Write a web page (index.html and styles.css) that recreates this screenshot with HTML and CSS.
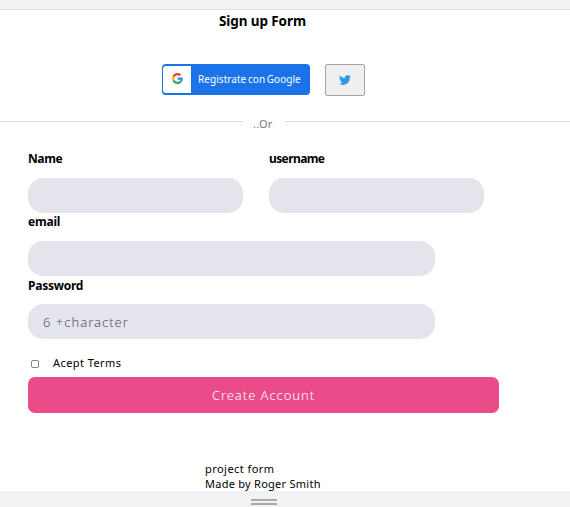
FILE: index.html
```html
<!DOCTYPE html>
<html lang="en">
<head>
<meta charset="utf-8">
<title>Sign up Form</title>
<link rel="stylesheet" href="styles.css">
</head>
<body>
<div class="topbar"></div>
<main class="page">
  <h1 class="title"><span class="title-text">Sign up Form</span></h1>
  <div class="social">
    <button class="google" type="button">
      <span class="google-icon">
        <svg width="11" height="11" viewBox="0 0 48 48"><path fill="#EA4335" d="M24 9.5c3.54 0 6.71 1.22 9.21 3.6l6.85-6.85C35.9 2.38 30.47 0 24 0 14.62 0 6.51 5.38 2.56 13.22l7.98 6.19C12.43 13.72 17.74 9.5 24 9.5z"/><path fill="#4285F4" d="M46.98 24.55c0-1.57-.15-3.09-.38-4.55H24v9.02h12.94c-.58 2.96-2.26 5.48-4.78 7.18l7.73 6c4.51-4.18 7.09-10.36 7.09-17.65z"/><path fill="#FBBC05" d="M10.53 28.59c-.48-1.45-.76-2.99-.76-4.59s.27-3.14.76-4.59l-7.98-6.19C.92 16.46 0 20.12 0 24s.92 7.54 2.56 10.78l7.97-6.19z"/><path fill="#34A853" d="M24 48c6.48 0 11.93-2.13 15.89-5.81l-7.73-6c-2.15 1.45-4.92 2.3-8.16 2.3-6.26 0-11.57-4.22-13.47-9.91l-7.98 6.19C6.51 42.62 14.62 48 24 48z"/></svg>
      </span>
      <span class="google-text">Registrate con Google</span>
    </button>
    <button class="twitter" type="button" aria-label="Twitter">
      <svg width="12" height="12" viewBox="0 0 24 24"><path fill="#2f9be8" d="M23.95 4.57a10 10 0 0 1-2.82.77 4.96 4.96 0 0 0 2.16-2.72c-.95.55-2 .95-3.13 1.18a4.92 4.92 0 0 0-8.38 4.48C7.69 8.1 4.07 6.13 1.64 3.16a4.93 4.93 0 0 0 1.52 6.57 4.9 4.9 0 0 1-2.23-.61v.06c0 2.39 1.7 4.38 3.95 4.83a5 5 0 0 1-2.21.08 4.94 4.94 0 0 0 4.6 3.42A9.87 9.87 0 0 1 0 19.54a13.99 13.99 0 0 0 7.55 2.21c9.05 0 14-7.5 14-13.98 0-.21 0-.42-.02-.63a9.94 9.94 0 0 0 2.46-2.55z"/></svg>
    </button>
  </div>
  <div class="divider"><span class="line line-left"></span><span class="or">..Or</span><span class="line line-right"></span></div>
  <form class="form">
    <div class="row">
      <label class="field half"><span class="label name">Name</span><input class="input" type="text"></label>
      <label class="field half"><span class="label username">username</span><input class="input" type="text"></label>
    </div>
    <label class="field wide"><span class="label email">email</span><input class="input" type="text"></label>
    <label class="field wide"><span class="label password">Password</span><input class="input" type="password" placeholder="6 +character"></label>
    <label class="terms"><input class="check" type="checkbox"><span class="terms-text">Acept Terms</span></label>
    <button class="create" type="button"><span class="create-text">Create Account</span></button>
  </form>
  <footer class="footer"><span class="foot-a">project form</span><span class="foot-b">Made by Roger Smith</span></footer>
</main>
<div class="bottombar"><span class="grip"></span></div>
</body>
</html>
```
FILE: styles.css
```css
* { box-sizing: border-box; }
body {
  margin: 0;
  width: 570px;
  height: 507px;
  overflow: hidden;
  display: flex;
  flex-direction: column;
  background: #fff;
  color: #000;
  font-family: "Noto Sans", "Open Sans", sans-serif;
  font-size: 11px;
}
button, input { font-family: inherit; margin: 0; }
span { white-space: nowrap; }
.topbar { height: 10px; flex: none; background: #f2f2f2; border-bottom: 1px solid #dedede; }
.page { height: 481px; flex: none; display: flex; flex-direction: column; }
.title { margin: 0; padding-left: 219px; height: 54px; font-size: 13.5px; line-height: 22px; letter-spacing: -0.1px; }
.social { display: flex; gap: 15px; height: 32px; padding-left: 162px; align-items: flex-start; }
.google { display: flex; width: 148px; height: 31px; padding: 2px 1px; border: 0; border-radius: 4px; background: #1a73e8; color: #fff; }
.google-icon { width: 28px; height: 27px; display: flex; justify-content: center; align-items: center; padding-bottom: 2px; border-radius: 3px 0 0 3px; background: #fff; }
.google-text { margin-left: 7px; font-size: 10px; line-height: 27px; letter-spacing: 0.05px; word-spacing: -1px; }
.twitter { display: flex; justify-content: center; align-items: center; width: 40px; height: 32px; padding: 0; border: 1px solid #a3a3a3; border-radius: 2px; background: #efefef; }
.divider { display: flex; height: 54px; padding-top: 16px; }
.line { height: 20px; border-top: 1px solid #dadcde; margin-top: 9px; }
.line-left { width: 243px; }
.line-right { flex: 1; }
.or { width: 42px; padding-left: 10px; color: #777; font-size: 11px; line-height: 24px; letter-spacing: 0.3px; }
.form { display: flex; flex-direction: column; align-items: flex-start; height: 303px; padding-left: 28px; }
.row { display: flex; gap: 26px; height: 63px; }
.field { display: flex; flex-direction: column; height: 63px; flex: none; }
.half { width: 215px; }
.wide { width: 407px; }
.label { height: 28px; line-height: 18px; font-size: 12px; font-weight: 700; letter-spacing: -0.25px; }
.username { letter-spacing: -0.6px; }
.email { letter-spacing: -0.2px; }
.name { letter-spacing: -0.4px; }
.password { line-height: 20px; }
.input { width: 100%; height: 35px; padding: 0 15px; border: 0; border-radius: 15px; background: #e4e4ed; font-size: 13px; font-weight: 300; }
.input::placeholder { color: #55555f; letter-spacing: 1px; }
.terms { display: flex; align-items: center; height: 19px; margin-top: 15px; padding-left: 3px; }
.check { appearance: none; width: 8px; height: 8px; border: 1px solid #858585; border-radius: 2px; background: #fff; }
.terms-text { margin-left: 14px; font-size: 11px; line-height: 15px; padding-bottom: 2px; letter-spacing: 0.43px; }
.create { width: 471px; height: 36px; margin-top: 4px; padding: 0; border: 0; border-radius: 7px; background: #ea4c89; color: #fff; font-size: 13px; font-weight: 300; letter-spacing: 0.95px; text-align: center; }
.footer { display: flex; flex-direction: column; padding: 8px 0 0 205px; font-size: 11px; line-height: 15px; letter-spacing: 0.26px; }
.foot-a { letter-spacing: 0.45px; }
.bottombar { height: 16px; flex: none; background: #f1f2f3; padding: 8px 0 0 251px; }
.grip { display: block; width: 26px; height: 6px; border: solid #a7a9ac; border-width: 2px 0; }
```
